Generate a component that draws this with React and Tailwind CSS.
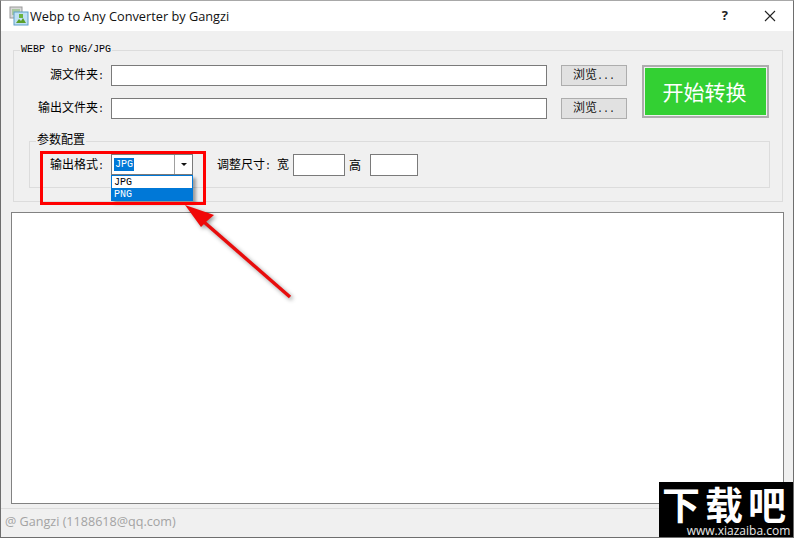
const cjk = "font-['Noto_Sans_CJK_SC','Noto_Sans',sans-serif]";
const mono = "font-['Liberation_Mono',monospace] text-[10px]";

// half-width latin bits of the original bitmap font
function Half({ children }) {
    return <span className={`${mono} whitespace-pre`}>{children}</span>;
}

function PathRow({ label }) {
    return (
        <div className="flex items-center h-[21px]">
            <span className="w-[90px] -mt-[2px] text-right text-[12px] text-black whitespace-nowrap">{label}<Half>:</Half></span>
            <div className="ml-[7px] w-[436px] h-[21px] bg-white border border-[#7a7a7a]"></div>
            <button className="ml-[14px] w-[66px] h-[21px] bg-[#e1e1e1] border border-[#adadad] text-[12px] text-[#111] flex items-center justify-center">
                <span className="-mt-[2px]">浏览<Half>...</Half></span>
            </button>
        </div>
    );
}

export default function App() {
    return (
        <div className={`relative w-[794px] h-[538px] overflow-hidden bg-[#f0f0f0] border border-[#6e6e6e] border-t-[#a8a8a8] ${cjk}`}>
            {/* title bar */}
            <div className="h-[30px] bg-white flex items-center">
                <svg width="20" height="20" viewBox="0 0 20 20" className="ml-[8px]">
                    <rect x="1" y="1" width="12" height="11" fill="#d8d8d8" stroke="#9a9a9a" />
                    <rect x="3" y="3" width="8" height="6" fill="#a8c8a0" />
                    <rect x="5" y="6" width="14" height="13" fill="#bfe0f5" stroke="#5f9fc8" />
                    <path d="M7 17l3-4 2 2 2-3 3 5z" fill="#5aa02c" />
                    <rect x="10" y="8" width="4" height="4" fill="#6cb33f" />
                </svg>
                <span className="ml-[1px] mt-[1px] text-[12.75px] font-['Open_Sans',sans-serif] text-[#111]">Webp to Any Converter by Gangzi</span>
                <span className="ml-auto mr-[36px] text-[13px] font-bold font-['Open_Sans',sans-serif] text-[#222]">?</span>
                <svg width="12" height="12" viewBox="0 0 12 12" className="mr-[17px]">
                    <path d="M1 1l10 10M11 1L1 11" stroke="#222" strokeWidth="1.1" fill="none" />
                </svg>
            </div>

            {/* settings group */}
            <div className="relative mt-[19px] ml-[12px] w-[770px] h-[152px] border border-[#dcdcdc] pt-[14px]">
                <span className={`absolute -top-[8px] left-[6px] px-[1px] bg-[#f0f0f0] ${mono} leading-[14px] text-black`}>WEBP to PNG/JPG</span>
                <div className="flex">
                    <div className="flex flex-col gap-[12px]">
                        <PathRow label="源文件夹" />
                        <PathRow label="输出文件夹" />
                    </div>
                    <div className="ml-[15px] w-[127px] h-[53px] border-2 border-[#adadad] p-[1px]">
                        <button className="w-full h-full pr-[2px] bg-[#33d033] text-white text-[21px] flex items-center justify-center">开始转换</button>
                    </div>
                </div>

                {/* params group */}
                <div className="relative mt-[22px] ml-[15px] w-[741px] h-[47px] border border-[#dcdcdc] flex items-center">
                    <span className="absolute -top-[11px] left-[6px] px-[1px] bg-[#f0f0f0] text-[12px] leading-[16px] text-black">参数配置</span>
                    <span className="ml-[20px] w-[54px] text-[12px] text-black whitespace-nowrap">输出格式<Half>:</Half></span>
                    <div className="ml-[7px] w-[82px] h-[21px] bg-white border border-[#7a7a7a] flex items-center">
                        <span className={`ml-[2px] px-[1px] bg-[#0078d7] text-white ${mono} leading-[13px]`}>JPG</span>
                        <div className="ml-auto w-[18px] h-full border-l border-[#a0a0a0] flex items-center justify-center">
                            <svg width="6" height="3" viewBox="0 0 6 3"><path d="M0 0h6L3 3z" fill="#111" /></svg>
                        </div>
                    </div>
                    <span className="ml-[24px] w-[72px] text-[12px] text-black whitespace-nowrap">调整尺寸<Half>: </Half>宽</span>
                    <div className="ml-[4px] w-[52px] h-[22px] bg-white border border-[#7a7a7a]"></div>
                    <span className="ml-[4px] text-[12px] text-black">高</span>
                    <div className="ml-[9px] w-[48px] h-[22px] bg-white border border-[#7a7a7a]"></div>
                </div>
            </div>

            {/* log box */}
            <div className="mt-[10px] ml-[10px] w-[773px] h-[292px] bg-white border border-[#828282]"></div>

            {/* status bar */}
            <div className="mt-[4px] border-t border-[#dcdcdc] h-[30px] pl-[4px] pt-[4px] text-[12.6px] leading-[18px] text-[#a3a3a3] font-['Open_Sans',sans-serif]">
                @ Gangzi (1188618@qq.com)
            </div>

            {/* open dropdown */}
            <div className={`absolute left-[110px] top-[174px] w-[82px] h-[26px] bg-white border border-[#0078d7] border-b-0 shadow-[3px_3px_3px_rgba(0,0,0,0.35)] ${mono} leading-[13px]`}>
                <div className="h-[12px] pl-[2px] text-black">JPG</div>
                <div className="h-[13px] pl-[2px] bg-[#0078d7] text-white">PNG</div>
            </div>

            {/* annotation */}
            <div className="absolute left-[39px] top-[150px] w-[166px] h-[54px] border-[3px] border-[#ff0000]"></div>
            <svg className="absolute left-[-1px] top-[-1px] drop-shadow-[2px_2px_2px_rgba(0,0,0,0.4)]" width="794" height="538" viewBox="0 0 794 538">
                <path d="M290 297L204 222" stroke="#e80d0d" strokeWidth="3.5" fill="none" />
                <path d="M185 205L214 215L207 221L201 227z" fill="#f00808" />
            </svg>

            {/* watermark */}
            <div className="absolute left-[658px] top-[481px] w-[135px] h-[56px] bg-black text-white flex flex-col items-center">
                <span className="h-[42px] text-[38px] leading-[42px] font-bold tracking-[5px] whitespace-nowrap">下载吧</span>
                <span className="h-[14px] text-[12px] leading-[14px] ml-[24px] font-['Open_Sans',sans-serif] text-[#e8e8e8] whitespace-nowrap">www.xiazaiba.com</span>
            </div>
        </div>
    );
}
